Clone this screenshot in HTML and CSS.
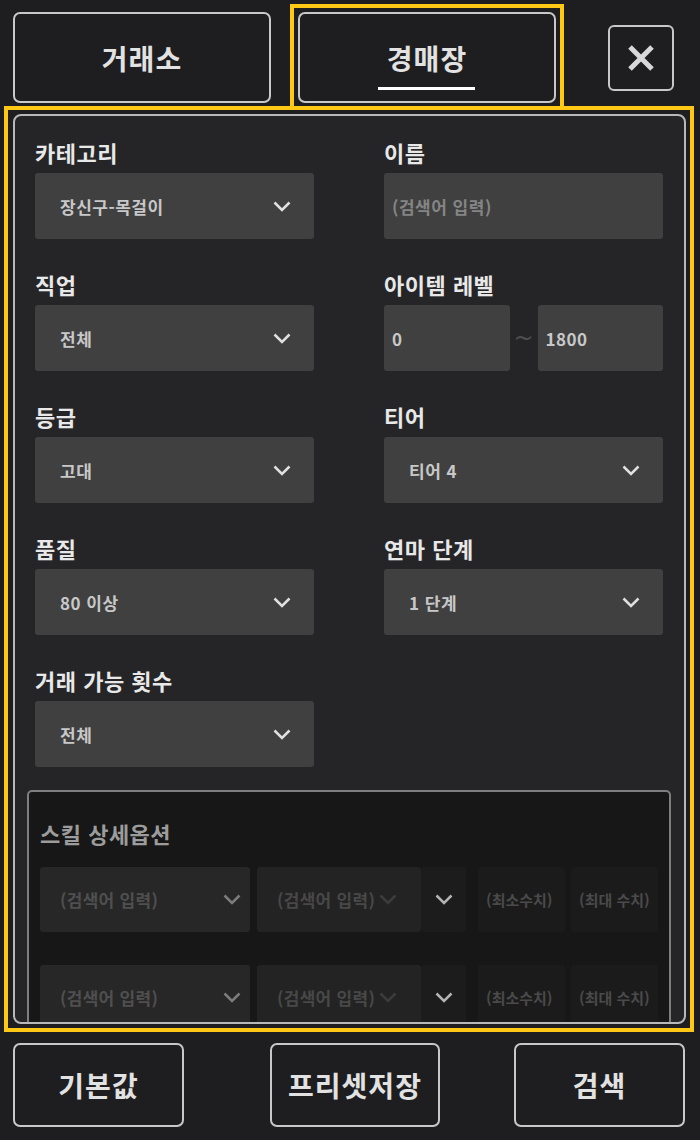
FILE: index.html
```html
<!DOCTYPE html>
<html lang="ko">
<head>
    <meta charset="UTF-8">
    <meta name="viewport" content="width=device-width, initial-scale=1.0">
    <title>경매장</title>
    <link rel="stylesheet" href="styles.css">
</head>
<body>
    <div class="top">
        <button class="tab">거래소</button>
        <div class="tab-frame">
            <button class="tab active"><span>경매장</span></button>
        </div>
        <button class="close" aria-label="닫기">
            <svg width="28" height="28" viewBox="0 0 28 28"><path d="M3 3 L25 25 M25 3 L3 25" stroke="#d8d8d8" stroke-width="5" fill="none"/></svg>
        </button>
    </div>

    <div class="frame">
        <div class="panel">
            <div class="fields">
                <div class="field">
                    <div class="label">카테고리</div>
                    <div class="select"><span>장신구-목걸이</span><svg class="chev" viewBox="0 0 18 11"><path d="M1.5 1.5 L9 9 L16.5 1.5"/></svg></div>
                </div>
                <div class="field">
                    <div class="label">이름</div>
                    <div class="input placeholder">(검색어 입력)</div>
                </div>
                <div class="field">
                    <div class="label">직업</div>
                    <div class="select"><span>전체</span><svg class="chev" viewBox="0 0 18 11"><path d="M1.5 1.5 L9 9 L16.5 1.5"/></svg></div>
                </div>
                <div class="field">
                    <div class="label">아이템 레벨</div>
                    <div class="range">
                        <div class="input">0</div>
                        <span class="tilde">~</span>
                        <div class="input">1800</div>
                    </div>
                </div>
                <div class="field">
                    <div class="label">등급</div>
                    <div class="select"><span>고대</span><svg class="chev" viewBox="0 0 18 11"><path d="M1.5 1.5 L9 9 L16.5 1.5"/></svg></div>
                </div>
                <div class="field">
                    <div class="label">티어</div>
                    <div class="select"><span>티어 4</span><svg class="chev" viewBox="0 0 18 11"><path d="M1.5 1.5 L9 9 L16.5 1.5"/></svg></div>
                </div>
                <div class="field">
                    <div class="label">품질</div>
                    <div class="select"><span>80 이상</span><svg class="chev" viewBox="0 0 18 11"><path d="M1.5 1.5 L9 9 L16.5 1.5"/></svg></div>
                </div>
                <div class="field">
                    <div class="label">연마 단계</div>
                    <div class="select"><span>1 단계</span><svg class="chev" viewBox="0 0 18 11"><path d="M1.5 1.5 L9 9 L16.5 1.5"/></svg></div>
                </div>
                <div class="field">
                    <div class="label">거래 가능 횟수</div>
                    <div class="select"><span>전체</span><svg class="chev" viewBox="0 0 18 11"><path d="M1.5 1.5 L9 9 L16.5 1.5"/></svg></div>
                </div>
            </div>

            <div class="skill">
                <div class="skill-title">스킬 상세옵션</div>
                <div class="skill-row">
                    <div class="s-select"><span>(검색어 입력)</span><svg class="chev" viewBox="0 0 18 11"><path d="M1.5 1.5 L9 9 L16.5 1.5"/></svg></div>
                    <div class="s-option"><span>(검색어 입력)</span><svg class="chev" viewBox="0 0 18 11"><path d="M1.5 1.5 L9 9 L16.5 1.5"/></svg></div>
                    <div class="s-toggle"><svg class="chev" viewBox="0 0 18 11"><path d="M1.5 1.5 L9 9 L16.5 1.5"/></svg></div>
                    <div class="s-num">(최소수치)</div>
                    <div class="s-num">(최대 수치)</div>
                </div>
                <div class="skill-row">
                    <div class="s-select"><span>(검색어 입력)</span><svg class="chev" viewBox="0 0 18 11"><path d="M1.5 1.5 L9 9 L16.5 1.5"/></svg></div>
                    <div class="s-option"><span>(검색어 입력)</span><svg class="chev" viewBox="0 0 18 11"><path d="M1.5 1.5 L9 9 L16.5 1.5"/></svg></div>
                    <div class="s-toggle"><svg class="chev" viewBox="0 0 18 11"><path d="M1.5 1.5 L9 9 L16.5 1.5"/></svg></div>
                    <div class="s-num">(최소수치)</div>
                    <div class="s-num">(최대 수치)</div>
                </div>
            </div>
        </div>
    </div>

    <div class="bottom">
        <button class="action">기본값</button>
        <button class="action preset">프리셋저장</button>
        <button class="action search">검색</button>
    </div>
</body>
</html>
```

FILE: styles.css
```css
body {
    margin: 0;
    background: #1e1e20;
    color: #e6e6e6;
    font-family: "Noto Sans CJK KR", "Noto Sans", sans-serif;
    width: 700px;
    height: 1140px;
    overflow: hidden;
}
button {
    font-family: inherit;
    cursor: pointer;
}
.top {
    display: flex;
    align-items: flex-end;
    height: 102px;
    padding: 4px 0 0 13px;
}
.tab {
    width: 258px;
    height: 91px;
    margin-bottom: 3px;
    background: #1e1e20;
    color: #e2e2e2;
    border: 2px solid #c8c8c8;
    border-radius: 7px;
    font-size: 28px;
    font-weight: 700;
    letter-spacing: 1px;
    padding: 0;
}
.tab-frame {
    margin-left: 19px;
    padding: 4px 4px 3px;
    border: 4px solid #ffc814;
    border-bottom: none;
}
.tab-frame .tab {
    display: block;
    margin: 0;
}
.tab.active span {
    position: relative;
    display: inline-block;
}
.tab.active span::after {
    content: "";
    position: absolute;
    left: -9px;
    right: -8px;
    bottom: -12px;
    height: 3px;
    background: #fff;
}
.close {
    width: 66px;
    height: 66px;
    margin: 0 0 15px 44px;
    background: #1e1e20;
    border: 2px solid #c8c8c8;
    border-radius: 6px;
    display: flex;
    align-items: center;
    justify-content: center;
    padding: 0;
}
.frame {
    margin: 0 6px 0 4px;
    border: 4px solid #ffc814;
    padding: 4px 4px 4px 5px;
}
.panel {
    height: 906px;
    background: #252527;
    border: 2px solid #b8b8b8;
    border-radius: 8px;
    overflow: hidden;
}
.fields {
    display: grid;
    grid-template-columns: 279px 279px;
    column-gap: 70px;
    row-gap: 31px;
    padding: 22px 20px 0;
}
.label {
    height: 28px;
    line-height: 28px;
    margin-bottom: 7px;
    font-size: 22px;
    font-weight: 700;
    letter-spacing: 0.5px;
    color: #e8e8e8;
}
.select,
.input {
    height: 66px;
    background: #404040;
    border-radius: 3px;
    display: flex;
    align-items: center;
    box-sizing: border-box;
    font-size: 17px;
    font-weight: 700;
    letter-spacing: 0.5px;
    color: #c8c8c8;
}
.select {
    justify-content: space-between;
    padding: 0 23px 0 25px;
}
.input {
    padding-left: 8px;
}
.placeholder {
    color: #858585;
}
.chev {
    width: 18px;
    height: 11px;
    fill: none;
    stroke: #e0e0e0;
    stroke-width: 2.5;
}
.range {
    display: flex;
    align-items: center;
}
.range .input {
    flex: 1;
}
.tilde {
    width: 28px;
    text-align: center;
    font-family: "DejaVu Sans", sans-serif;
    font-size: 24px;
    color: #4e4e4e;
}
.skill {
    margin: 23px 13px 0 12px;
    height: 300px;
    background: #171717;
    border: 2px solid #7e7e7e;
    border-radius: 5px;
    padding: 27px 0 0 11px;
}
.skill-title {
    height: 28px;
    line-height: 28px;
    font-size: 22px;
    font-weight: 700;
    letter-spacing: 0.5px;
    color: #9c9c9c;
    margin-bottom: 20px;
}
.skill-row {
    display: flex;
    height: 65px;
    margin-bottom: 33px;
    font-size: 17px;
    font-weight: 700;
    letter-spacing: 0.3px;
}
.skill-row > div {
    border-radius: 3px;
    display: flex;
    align-items: center;
    box-sizing: border-box;
}
.s-select {
    width: 210px;
    margin-right: 7px;
    background: #272727;
    color: #4f4f4f;
    justify-content: space-between;
    padding: 0 9px 0 20px;
}
.s-select .chev {
    stroke: #7c7c7c;
}
.s-option {
    width: 164px;
    background: #232323;
    color: #484848;
    padding-left: 20px;
    gap: 4px;
    white-space: nowrap;
}
.s-option .chev {
    flex: none;
    stroke: #3c3c3c;
}
.s-toggle {
    width: 45px;
    background: #1c1c1c;
    justify-content: center;
}
.s-toggle .chev {
    stroke: #b4b4b4;
}
.s-num {
    width: 87px;
    margin-left: 6px;
    background: #1b1b1b;
    color: #4a4a4a;
    font-size: 15px;
    letter-spacing: 0;
    padding-left: 8px;
    white-space: nowrap;
}
.s-toggle + .s-num {
    margin-left: 12px;
}
.bottom {
    display: flex;
    padding: 11px 0 0 13px;
}
.action {
    width: 171px;
    height: 84px;
    background: #1e1e20;
    color: #e2e2e2;
    border: 2px solid #c8c8c8;
    border-radius: 7px;
    font-size: 28px;
    font-weight: 700;
    letter-spacing: 1px;
    padding: 0;
}
.preset {
    width: 170px;
    margin-left: 86px;
}
.search {
    margin-left: 74px;
}
```
